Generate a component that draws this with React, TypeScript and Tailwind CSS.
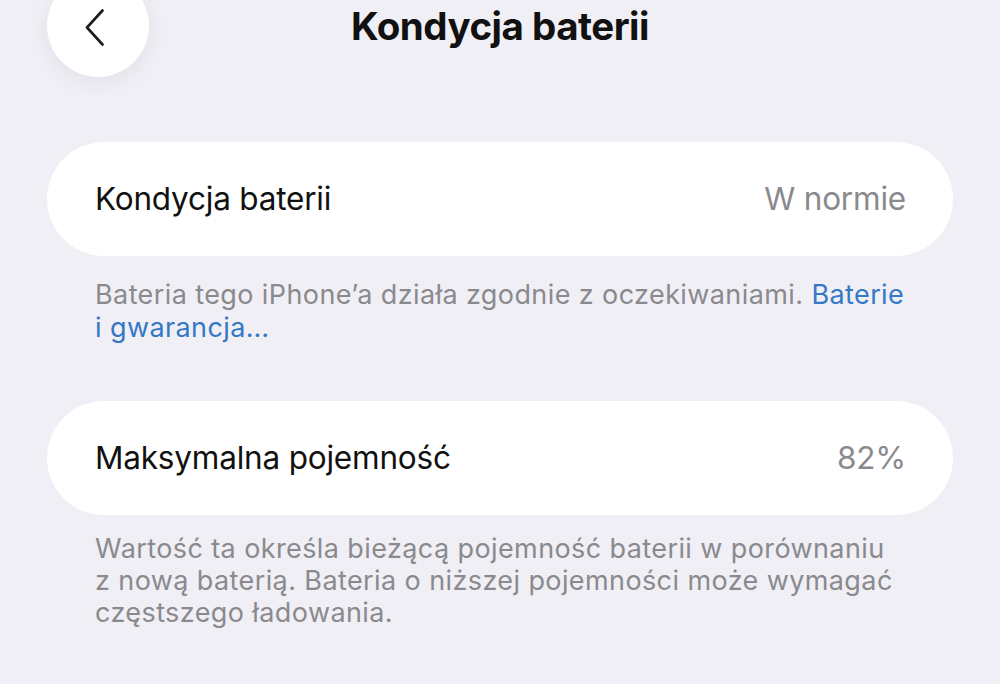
const font = { fontFamily: "Inter, 'Noto Sans', sans-serif" }

function Row({ label, value }: { label: string; value: string }) {
  return (
    <div className="flex h-[114px] items-center justify-between rounded-full bg-white pl-[48px] pr-[47px]">
      <span className="text-[31.5px] tracking-[-0.2px] text-[#111111]">{label}</span>
      <span className="text-[31.5px] tracking-[-0.2px] text-[#8a8a8e]">{value}</span>
    </div>
  )
}

export default function App() {
  return (
    <div className="h-[684px] w-[1000px] overflow-hidden bg-[#f0eff5]" style={font}>
      {/* Header */}
      <div className="grid h-[60px] grid-cols-[1fr_auto_1fr] items-start px-[47px]">
        <div>
          <div className="-mt-[25px] flex h-[102px] w-[102px] items-center justify-center rounded-full bg-white pt-[2px] shadow-[0_6px_24px_rgba(0,0,0,0.06)]">
            <svg width="20" height="37" viewBox="0 0 20 37" fill="none" className="-ml-[6px] mt-[1px]">
              <path d="M17.5 1.5 L2 18.5 L17.5 35.5" stroke="#1c1c1e" strokeWidth="2.6" strokeLinecap="round" strokeLinejoin="round" />
            </svg>
          </div>
        </div>
        <h1 className="mt-[2px] text-[38.5px] font-bold leading-[48px] tracking-[-0.5px] text-[#111111]">
          Kondycja baterii
        </h1>
        <div />
      </div>

      <div className="px-[47px]">
        <div className="mt-[82px]">
          <Row label="Kondycja baterii" value="W normie" />
        </div>
        <p className="mt-[22px] pl-[48px] pr-[10px] text-[27px] leading-[33px] tracking-[0.4px] text-[#8a8a8e]">
          Bateria tego iPhone’a działa zgodnie z oczekiwaniami.{" "}
          <span className="text-[#3478c6]">
            Baterie
            <br />i gwarancja…
          </span>
        </p>

        <div className="mt-[57px]">
          <Row label="Maksymalna pojemność" value="82%" />
        </div>
        <p className="mt-[18px] pl-[48px] pr-[10px] text-[27px] leading-[32px] tracking-[0.4px] text-[#8a8a8e]">
          Wartość ta określa bieżącą pojemność baterii w porównaniu
          <br />z nową baterią. Bateria o niższej pojemności może wymagać
          <br />
          częstszego ładowania.
        </p>
      </div>
    </div>
  )
}
